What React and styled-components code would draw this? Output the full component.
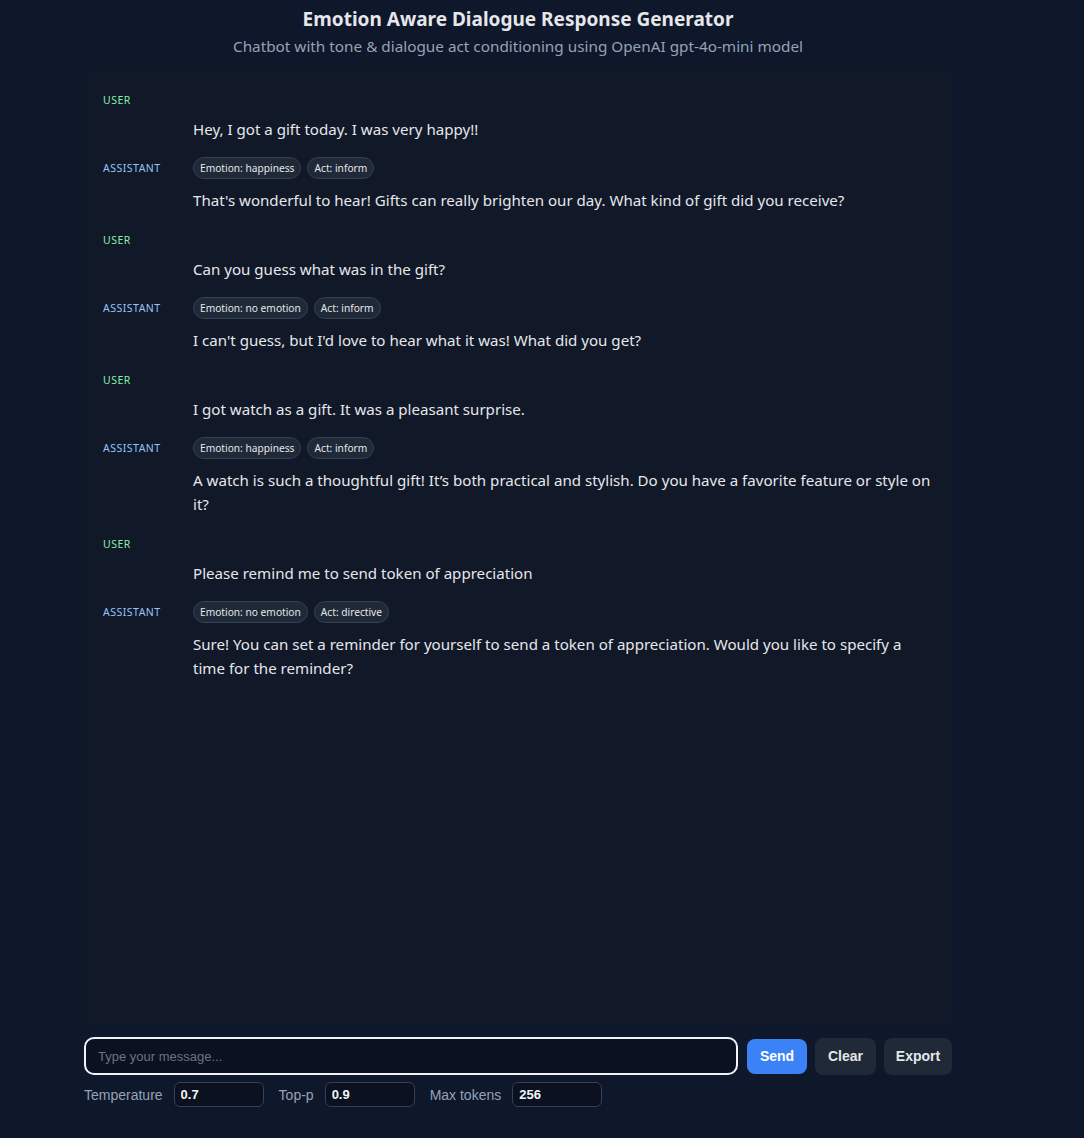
import React from 'react'
import styled, { createGlobalStyle } from 'styled-components'

const GlobalStyle = createGlobalStyle`
  html, body {
    margin: 0;
    padding: 0;
    background: #0f172a;
  }
  body {
    font-family: "Noto Sans", "Open Sans", sans-serif;
    color: #e5e7eb;
  }
  * { box-sizing: border-box; }
`

const messages = [
  { role: 'user', text: 'Hey, I got a gift today. I was very happy!!' },
  { role: 'assistant', emotion: 'happiness', act: 'inform', text: "That's wonderful to hear! Gifts can really brighten our day. What kind of gift did you receive?" },
  { role: 'user', text: 'Can you guess what was in the gift?' },
  { role: 'assistant', emotion: 'no emotion', act: 'inform', text: "I can't guess, but I'd love to hear what it was! What did you get?" },
  { role: 'user', text: 'I got watch as a gift. It was a pleasant surprise.' },
  { role: 'assistant', emotion: 'happiness', act: 'inform', text: 'A watch is such a thoughtful gift! It\u2019s both practical and stylish. Do you have a favorite feature or style on it?' },
  { role: 'user', text: 'Please remind me to send token of appreciation' },
  { role: 'assistant', emotion: 'no emotion', act: 'directive', text: 'Sure! You can set a reminder for yourself to send a token of appreciation. Would you like to specify a time for the reminder?' },
]

const Page = styled.div`
  height: 100vh;
  display: flex;
  flex-direction: column;
  width: 868px;
  margin-left: 84px;
  padding-bottom: 31px;
`

const Header = styled.header`
  text-align: center;
  padding-top: 5px;
  height: 68px;
`

const Title = styled.h1`
  margin: 0;
  font-size: 19px;
  line-height: 28px;
  font-weight: 700;
  color: #e5e7eb;
`

const Subtitle = styled.p`
  margin: 3px 0 0;
  font-size: 15.3px;
  line-height: 20px;
  color: #94a3b8;
`

const ChatPanel = styled.section`
  flex: 1;
  background: #111827;
  padding: 21px 19px;
  display: flex;
  flex-direction: column;
  overflow: hidden;
`

const Message = styled.div`
  display: grid;
  grid-template-columns: 90px 1fr;
  margin-top: ${p => (p.$user ? '17px' : '16px')};
  &:first-child {
    margin-top: 0;
  }
`

const Role = styled.div`
  font-size: 10.5px;
  line-height: 22px;
  letter-spacing: 0.5px;
  text-transform: uppercase;
  color: ${p => (p.$user ? '#86efac' : '#93c5fd')};
`

const Content = styled.div`
  display: flex;
  flex-direction: column;
  padding-top: ${p => (p.$user ? '28px' : '0')};
  max-width: 739px;
`

const Meta = styled.div`
  display: flex;
  gap: 6px;
  height: 22px;
  margin-bottom: 9px;
`

const Chip = styled.span`
  display: inline-flex;
  align-items: center;
  height: 22px;
  padding: 0 6px;
  border-radius: 11px;
  background: #1f2937;
  border: 1px solid #334155;
  font-size: 10.2px;
  color: #e5e7eb;
`

const Text = styled.div`
  font-size: 15.1px;
  line-height: 24px;
  color: #e5e7eb;
`

const Composer = styled.div`
  display: flex;
  align-items: center;
  gap: 8px;
  margin-top: 15px;
`

const MessageInput = styled.input`
  flex: 1;
  height: 38px;
  margin-right: 1px;
  border: 2px solid #f1f5f9;
  border-radius: 10px;
  background: #0b1120;
  padding: 0 12px;
  font-family: "Liberation Sans", Arial, sans-serif;
  font-size: 13px;
  color: #e5e7eb;
  outline: none;
  &::placeholder { color: #6b7280; }
`

const Button = styled.button`
  width: ${p => p.$width}px;
  height: ${p => (p.$primary ? '35px' : '37px')};
  padding: 0;
  border: none;
  border-radius: 8px;
  background: ${p => (p.$primary ? '#3b82f6' : '#1f2937')};
  color: ${p => (p.$primary ? '#ffffff' : '#e5e7eb')};
  font-family: "Liberation Sans", Arial, sans-serif;
  font-size: 14px;
  font-weight: 700;
`

const Controls = styled.div`
  display: flex;
  align-items: center;
  gap: 15px;
  margin-top: 7px;
`

const Field = styled.label`
  display: flex;
  align-items: center;
  gap: 11px;
  font-family: "Liberation Sans", Arial, sans-serif;
  font-size: 14px;
  color: #94a3b8;
`

const NumberInput = styled.input`
  width: 90px;
  height: 25px;
  border: 1px solid #334155;
  border-radius: 6px;
  background: #0b1120;
  padding: 0 6px;
  font-family: "Liberation Sans", Arial, sans-serif;
  font-size: 13px;
  font-weight: 700;
  color: #f1f5f9;
  outline: none;
`

export default function App() {
  return (
    <>
      <GlobalStyle />
      <Page>
        <Header>
          <Title>Emotion Aware Dialogue Response Generator</Title>
          <Subtitle>Chatbot with tone &amp; dialogue act conditioning using OpenAI gpt-4o-mini model</Subtitle>
        </Header>
        <ChatPanel>
          {messages.map((m, i) => {
            const isUser = m.role === 'user'
            return (
              <Message key={i} $user={isUser}>
                <Role $user={isUser}>{m.role}</Role>
                <Content $user={isUser}>
                  {!isUser && (
                    <Meta>
                      <Chip>Emotion: {m.emotion}</Chip>
                      <Chip>Act: {m.act}</Chip>
                    </Meta>
                  )}
                  <Text>{m.text}</Text>
                </Content>
              </Message>
            )
          })}
        </ChatPanel>
        <Composer>
          <MessageInput placeholder="Type your message..." />
          <Button $primary $width={60}>Send</Button>
          <Button $width={61}>Clear</Button>
          <Button $width={68}>Export</Button>
        </Composer>
        <Controls>
          <Field>Temperature <NumberInput defaultValue="0.7" /></Field>
          <Field>Top-p <NumberInput defaultValue="0.9" /></Field>
          <Field>Max tokens <NumberInput defaultValue="256" /></Field>
        </Controls>
      </Page>
    </>
  )
}
